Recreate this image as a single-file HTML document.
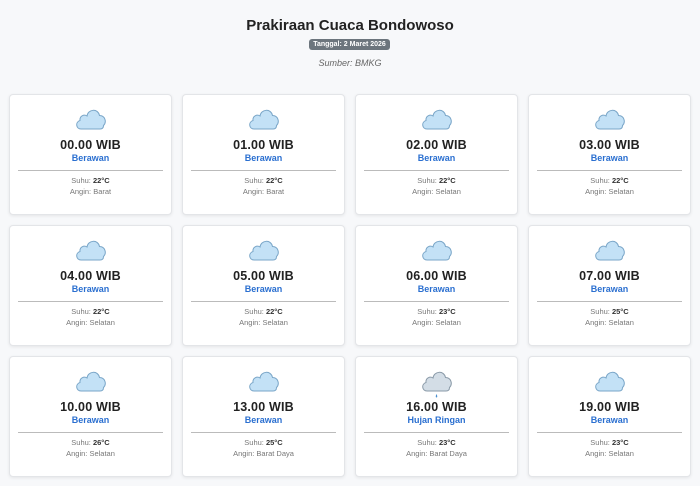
<!DOCTYPE html>
<html><head><style>
body{margin:0;background:#f7f8fa;font-family:"Liberation Sans",sans-serif;width:700px;height:486px;overflow:hidden;position:relative}
h1{position:absolute;top:17px;left:0;width:700px;text-align:center;margin:0;font-size:15px;font-weight:bold;color:#222}
.badge{position:absolute;top:39px;left:309px;width:81px;height:11px;background:#6c757d;color:#fff;font-size:7px;font-weight:bold;text-align:center;line-height:11px;border-radius:3px}
.src{position:absolute;top:58px;left:0;width:700px;text-align:center;font-size:9px;font-style:italic;color:#666}
.card{position:absolute;width:163px;height:121px;background:#fff;border:1px solid #e3e5e8;border-radius:4px;box-shadow:0 1px 3px rgba(0,0,0,.08);text-align:center;box-sizing:border-box}
.card svg{position:absolute;left:64px;top:11px}
.t{position:absolute;top:43px;width:100%;font-size:12.5px;font-weight:bold;color:#222;letter-spacing:.2px}
.d{position:absolute;top:58px;width:100%;font-size:9px;font-weight:bold;color:#2a6fd0}
.hr{position:absolute;top:75px;left:8px;right:8px;border-top:1px solid #bbb}
.s{position:absolute;top:81px;width:100%;font-size:7.5px;color:#777}
.s b{color:#333}
.a{position:absolute;top:92px;width:100%;font-size:7.5px;color:#777}
</style></head><body>
<h1>Prakiraan Cuaca Bondowoso</h1>
<div class="badge">Tanggal: 2 Maret 2026</div>
<div class="src">Sumber: BMKG</div>
<div id="g"></div>
<script>
var d=[["00.00","Berawan",22,"Barat"],["01.00","Berawan",22,"Barat"],["02.00","Berawan",22,"Selatan"],["03.00","Berawan",22,"Selatan"],["04.00","Berawan",22,"Selatan"],["05.00","Berawan",22,"Selatan"],["06.00","Berawan",23,"Selatan"],["07.00","Berawan",25,"Selatan"],["10.00","Berawan",26,"Selatan"],["13.00","Berawan",25,"Barat Daya"],["16.00","Hujan Ringan",23,"Barat Daya"],["19.00","Berawan",23,"Selatan"]];
var h="";
d.forEach(function(r,i){var x=9+(i%4)*173,y=94+Math.floor(i/4)*131;var rain=r[1]!="Berawan";
var f=rain?"#d3dde6":"#c3e1f6",st=rain?"#8a9aa8":"#7aa6c8";
h+='<div class="card" style="left:'+x+'px;top:'+y+'px"><svg width="34" height="32" viewBox="0 0 34 32"><path d="M7 23 C2 23 1 16 6 14.5 C5.5 10 10 8 13 10 C14 3 24 2 25.5 9.5 C31 9.5 33 16 29.5 19.5 C29.5 22 28 23 26 23 Z" fill="'+f+'" stroke="'+st+'" stroke-width="1"/>'+(rain?'<path d="M16.5 26 C15.5 28 15.5 29.5 16.5 29.5 C17.5 29.5 17.5 28 16.5 26Z" fill="#4a8fd0"/>':'')+'</svg><div class="t">'+r[0]+' WIB</div><div class="d">'+r[1]+'</div><div class="hr"></div><div class="s">Suhu: <b>'+r[2]+'°C</b></div><div class="a">Angin: '+r[3]+'</div></div>';});
document.getElementById("g").innerHTML=h;
</script>
</body></html>
